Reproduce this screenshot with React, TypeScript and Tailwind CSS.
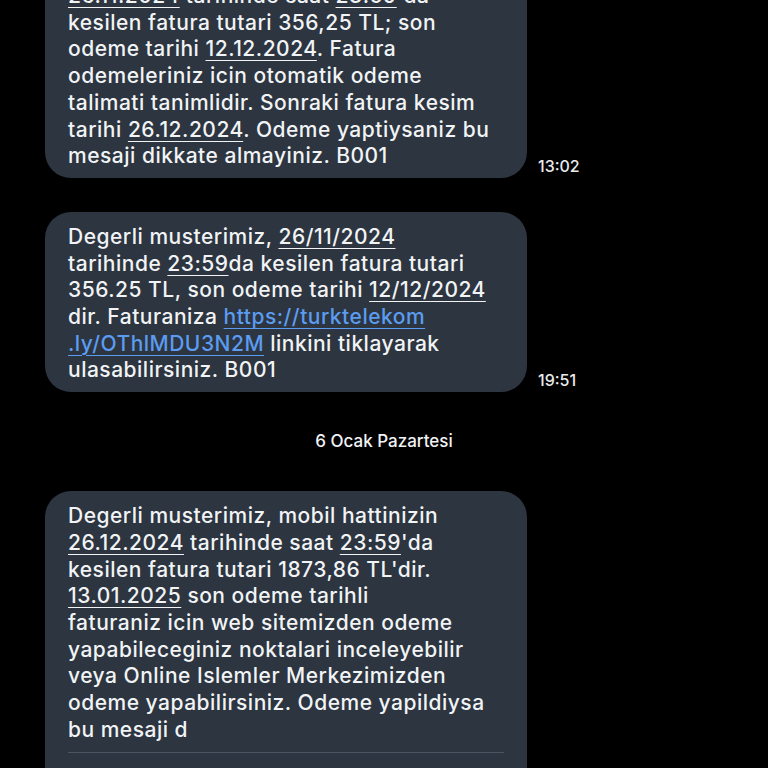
import React from 'react';

const U = ({ children }: { children: React.ReactNode }) => (
  <span className="underline decoration-1 underline-offset-[4px]">{children}</span>
);

const L = ({ children }: { children: React.ReactNode }) => (
  <span className="text-[#5b9cf0] underline decoration-1 underline-offset-[4px]">{children}</span>
);

const Bubble = ({
  lines,
  time,
  className = '',
  footer,
}: {
  lines: React.ReactNode[];
  time?: string;
  className?: string;
  footer?: React.ReactNode;
}) => (
  <div className={`flex items-end pl-[45px] ${className}`}>
    <div className="w-[482px] rounded-[26px] bg-[#2c3540] pl-[23px] pr-4 pt-[12px] pb-[8px]">
      <div className="text-[21px] tracking-[0.5px] leading-[26.7px] font-medium text-[#f1f3f5] whitespace-nowrap">
        {lines.map((l, i) => (
          <div key={i}>{l}</div>
        ))}
      </div>
      {footer}
    </div>
    {time && (
      <span className="ml-[11px] mb-[2px] text-[16px] leading-5 font-medium text-[#e8eaec]">{time}</span>
    )}
  </div>
);

export default function App() {
  return (
    <div
      className="w-full h-[768px] bg-black overflow-hidden"
      style={{ fontFamily: 'Inter, "Noto Sans", sans-serif' }}
    >
      <Bubble
        className="-mt-[29px]"
        time="13:02"
        lines={[
          <><U>26.11.2024</U> tarihinde saat <U>23:59</U>'da</>,
          <>kesilen fatura tutari 356,25 TL; son</>,
          <>odeme tarihi <U>12.12.2024</U>. Fatura</>,
          <>odemeleriniz icin otomatik odeme</>,
          <>talimati tanimlidir. Sonraki fatura kesim</>,
          <>tarihi <U>26.12.2024</U>. Odeme yaptiysaniz bu</>,
          <>mesaji dikkate almayiniz. B001</>,
        ]}
      />
      <Bubble
        className="mt-[34px]"
        time="19:51"
        lines={[
          <>Degerli musterimiz, <U>26/11/2024</U></>,
          <>tarihinde <U>23:59</U>da kesilen fatura tutari</>,
          <>356.25 TL, son odeme tarihi <U>12/12/2024</U></>,
          <>dir. Faturaniza <L>https://turktelekom</L></>,
          <><L>.ly/OThlMDU3N2M</L> linkini tiklayarak</>,
          <>ulasabilirsiniz. B001</>,
        ]}
      />
      <div className="h-[99px] flex items-center justify-center">
        <span className="text-[17px] font-medium text-[#f1f3f5]">6 Ocak Pazartesi</span>
      </div>
      <Bubble
        lines={[
          <>Degerli musterimiz, mobil hattinizin</>,
          <><U>26.12.2024</U> tarihinde saat <U>23:59</U>'da</>,
          <>kesilen fatura tutari 1873,86 TL'dir.</>,
          <><U>13.01.2025</U> son odeme tarihli</>,
          <>faturaniz icin web sitemizden odeme</>,
          <>yapabileceginiz noktalari inceleyebilir</>,
          <>veya Online Islemler Merkezimizden</>,
          <>odeme yapabilirsiniz. Odeme yapildiysa</>,
          <>bu mesaji d</>,
        ]}
        footer={
          <div className="mt-[9px] mr-[7px] h-px bg-[#4a5561] mb-[60px]" />
        }
      />
    </div>
  );
}
